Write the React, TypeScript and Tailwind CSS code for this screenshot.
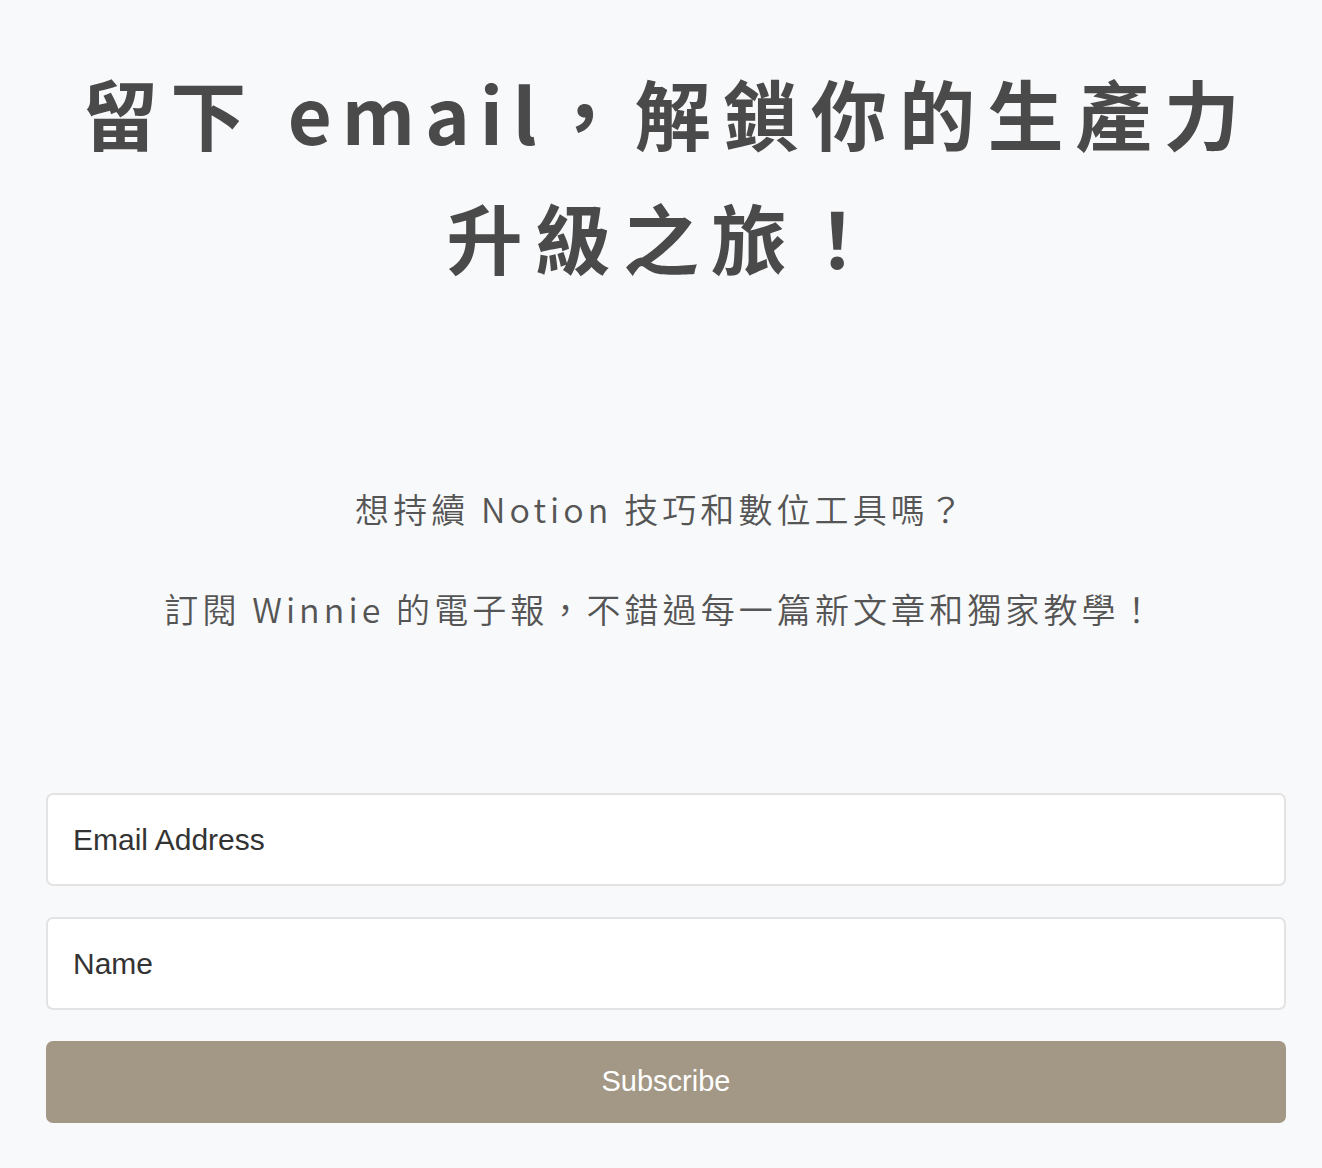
import React from "react";

function Field({ placeholder }: { placeholder: string }) {
  return (
    <input
      type="text"
      placeholder={placeholder}
      className="w-full h-[93px] rounded-[7px] border-2 border-[#e3e3e3] bg-white px-[25px] font-['Liberation_Sans',Arial,sans-serif] text-[30px] text-[#333] placeholder:text-[#333] outline-none"
    />
  );
}

export default function App() {
  return (
    <div className="min-h-[1168px] bg-[#f8f9fa] pt-[50px] font-['Noto_Sans_CJK_TC','Noto_Sans',sans-serif]">
      <h1 className="pl-[12px] text-center text-[76px] font-bold leading-[124px] tracking-[0.16em] text-[#4a4a4a]">
        留下 <span className="tracking-[0.13em]">email</span>，解鎖你的生產力
        <br />
        升級之旅！
      </h1>

      <div className="mt-[186px] text-center text-[34px] font-[350] leading-[50px] tracking-[0.12em] text-[#555]">
        <p>想持續 Notion 技巧和數位工具嗎？</p>
        <p className="mt-[50px]">訂閱 Winnie 的電子報，不錯過每一篇新文章和獨家教學！</p>
      </div>

      <form
        className="ml-[46px] mr-[36px] mt-[159px] flex flex-col gap-[31px]"
        onSubmit={(e) => e.preventDefault()}
      >
        <Field placeholder="Email Address" />
        <Field placeholder="Name" />
        <button
          type="submit"
          className="h-[82px] w-full rounded-[7px] bg-[#a39786] font-['Liberation_Sans',Arial,sans-serif] text-[29px] text-white"
        >
          Subscribe
        </button>
      </form>
    </div>
  );
}
